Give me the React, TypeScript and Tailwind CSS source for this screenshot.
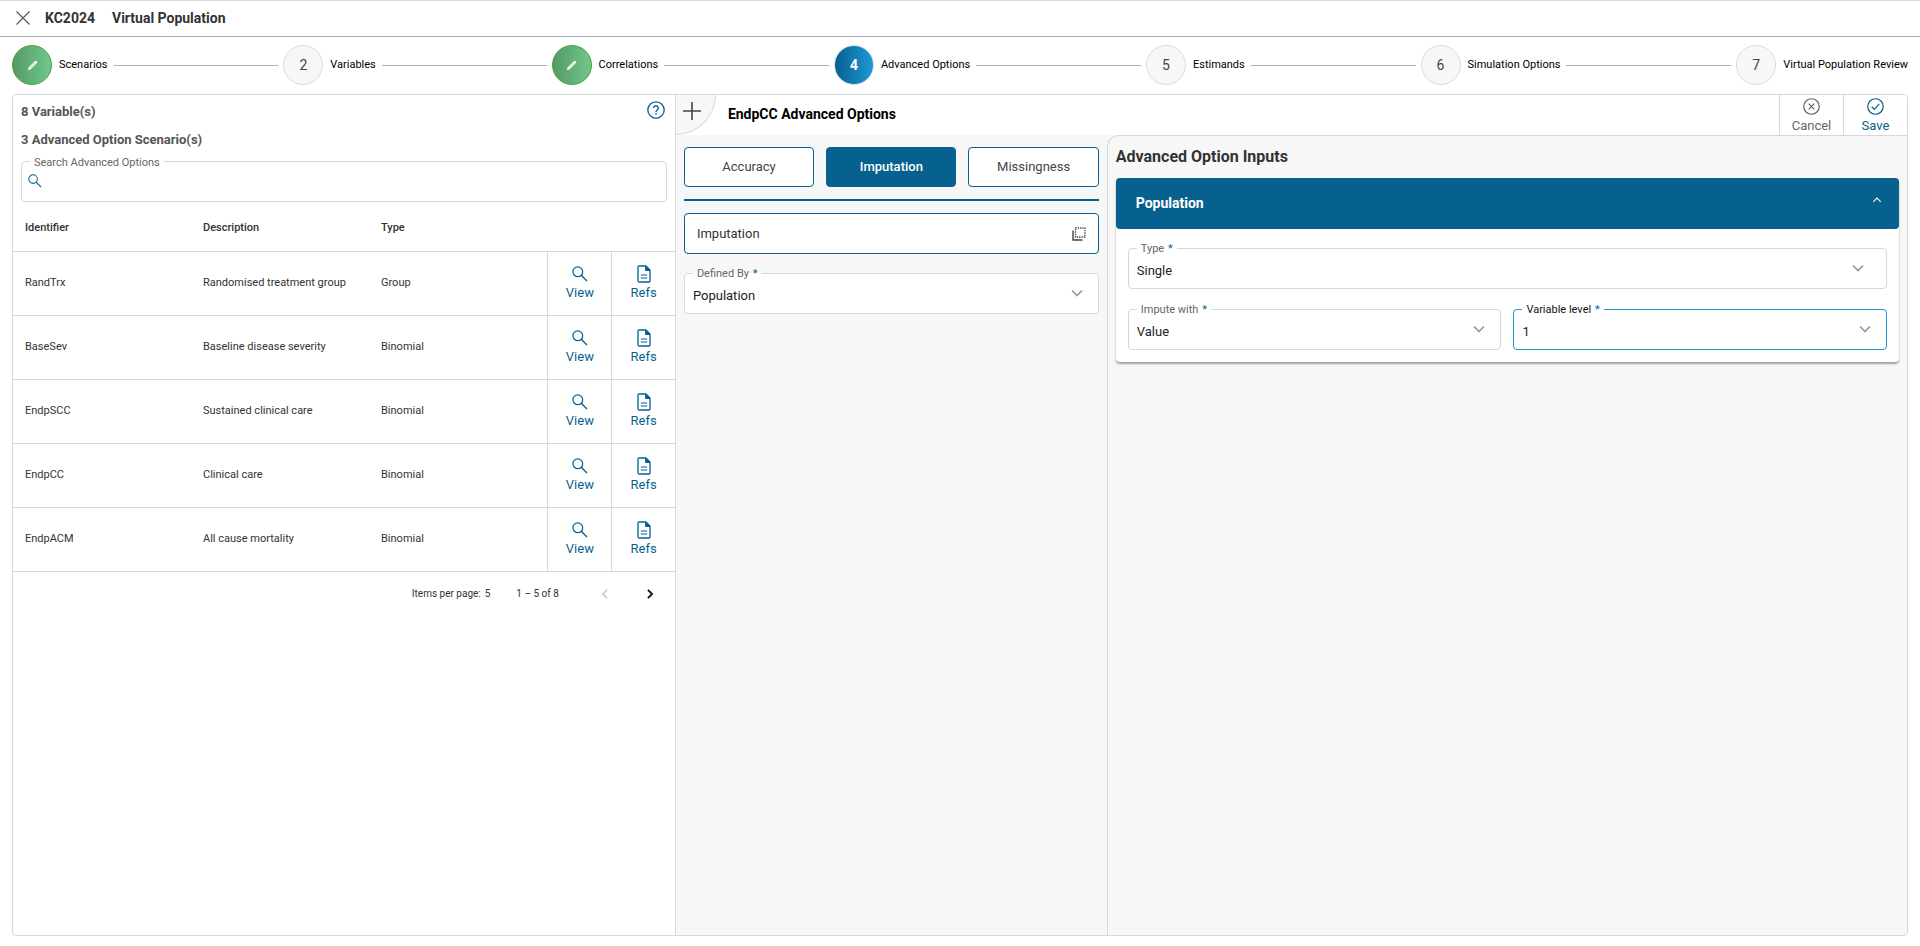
import { Fragment, type ReactNode } from "react";

type StepState = "done" | "active" | "todo";

const steps: { label: string; state: StepState }[] = [
  { label: "Scenarios", state: "done" },
  { label: "Variables", state: "todo" },
  { label: "Correlations", state: "done" },
  { label: "Advanced Options", state: "active" },
  { label: "Estimands", state: "todo" },
  { label: "Simulation Options", state: "todo" },
  { label: "Virtual Population Review", state: "todo" },
];

const circleClass: Record<StepState, string> = {
  done: "border-[#4d9f3f] bg-linear-to-r from-[#559b66] to-[#70c78b] text-white",
  active: "border-[#cfe3ee] bg-linear-to-r from-[#07618e] to-[#1c9ad6] font-bold text-white",
  todo: "border-[#d9dedd] bg-[#f7f7f7] font-normal text-[#444]",
};

const rows = [
  { id: "RandTrx", description: "Randomised treatment group", type: "Group" },
  { id: "BaseSev", description: "Baseline disease severity", type: "Binomial" },
  { id: "EndpSCC", description: "Sustained clinical care", type: "Binomial" },
  { id: "EndpCC", description: "Clinical care", type: "Binomial" },
  { id: "EndpACM", description: "All cause mortality", type: "Binomial" },
];

function PencilIcon() {
  return (
    <svg viewBox="0 0 12 12" className="size-[11px]" aria-hidden="true">
      <path d="M1 11l.7-2.8L8.600 1.300a1.300 1.300 0 0 1 2.100 2.100L3.800 10.300z" fill="#fff" />
      <path d="M3.300 8.700l5.400-5.400" stroke="#70bd86" strokeWidth=".6" />
    </svg>
  );
}

function SearchIcon({ className }: { className: string }) {
  return (
    <svg viewBox="0 0 16 16" className={className} fill="none" stroke="currentColor" aria-hidden="true">
      <circle cx="5.800" cy="5.800" r="4.900" strokeWidth="1.200" />
      <path d="M9.300 9.300l5.700 5.700" strokeWidth="1.400" />
    </svg>
  );
}

function DocumentIcon() {
  return (
    <svg viewBox="0 0 14 18" className="h-[18px] w-3.5" fill="none" stroke="currentColor" aria-hidden="true">
      <path d="M1 2.200Q1 1 2.200 1H9l4 4v10.800q0 1.200-1.200 1.200H2.200Q1 17 1 15.800z" strokeWidth="1.300" />
      <path d="M8.500 1v4.500H13z" fill="currentColor" />
      <path d="M3.800 10h6.400M3.800 13h6.400" strokeWidth="1.200" />
    </svg>
  );
}

function Chevron({ className, d = "M1 1.500l5 5 5-5", width = 1.7 }: { className: string; d?: string; width?: number }) {
  return (
    <svg viewBox="0 0 12 8" className={className} fill="none" stroke="currentColor" strokeWidth={width} aria-hidden="true">
      <path d={d} />
    </svg>
  );
}

function SelectField({
  id,
  label,
  value,
  focused = false,
  chevron = "right-[15px]",
}: {
  id: string;
  label: string;
  value: string;
  focused?: boolean;
  chevron?: string;
}) {
  return (
    <div
      className={`relative h-[41px] min-w-0 flex-1 rounded border bg-white ${focused ? "border-[#1e96cf]" : "border-[#d3dada]"}`}
    >
      <label
        htmlFor={id}
        className={`absolute -top-2 left-2 bg-linear-to-b from-transparent from-50% to-white to-50% px-1 text-[11px] leading-4 ${focused ? "text-[#111]" : "text-[#666]"}`}
      >
        <span className="absolute inset-x-0 top-[7px] h-0.5 bg-white" />
        <span className="relative">
          {label} <span className="ml-px text-[#07618e]">*</span>
        </span>
      </label>
      <select
        id={id}
        defaultValue={value}
        className="h-full w-full appearance-none bg-transparent pt-1 pl-2 text-[13px] text-[#222] outline-none"
      >
        <option>{value}</option>
      </select>
      <Chevron className={`pointer-events-none absolute top-[15px] h-2 w-3 text-[#999] ${chevron}`} />
    </div>
  );
}

function ToolbarButton({ label, className, children }: { label: string; className: string; children: ReactNode }) {
  return (
    <button
      type="button"
      className={`flex w-16 flex-col items-center justify-center gap-[3px] border-l border-[#d3dada] pt-px text-[13px] leading-4 ${className}`}
    >
      {children}
      {label}
    </button>
  );
}

export default function App() {
  return (
    <div className="flex min-h-screen flex-col border-t border-[#ddd] bg-white font-[Roboto,sans-serif] text-[#333]">
      <header className="flex h-9 items-center border-b border-[#a3b3b3] pb-0.5 pl-4 text-sm font-bold">
        <button type="button" aria-label="Close" className="mr-[15px]">
          <svg viewBox="0 0 14 14" className="size-3.5" fill="none" stroke="#555" strokeWidth="1.100">
            <path d="M.5.5l13 13M13.500.5l-13 13" />
          </svg>
        </button>
        <span className="mr-[17px]">KC2024</span>
        <h1>Virtual Population</h1>
      </header>

      <ol className="flex items-center px-3 pt-2 pb-1.5 text-[11px] text-black">
        {steps.map((step, index) => (
          <Fragment key={step.label}>
            {index > 0 && <li aria-hidden="true" className="mr-[5px] ml-1.5 h-px flex-1 bg-[#a3b3b3]" />}
            <li className="flex items-center gap-[7px]">
              <span
                className={`flex size-10 items-center justify-center rounded-full border text-sm ${circleClass[step.state]}`}
              >
                {step.state === "done" ? <PencilIcon /> : index + 1}
              </span>
              {step.label}
            </li>
          </Fragment>
        ))}
      </ol>

      <main className="mx-3 mt-[3px] mb-[10px] flex flex-1 overflow-hidden rounded border border-[#d3dada]">
        <section className="flex w-[35%] flex-col border-r border-[#d3dada]">
          <div className="flex justify-between pt-1.5 pr-[10px] pl-2">
            <div className="pt-px text-[13px] font-bold text-[#555]">
              <p className="leading-5">8 Variable(s)</p>
              <p className="mt-2 leading-5">3 Advanced Option Scenario(s)</p>
            </div>
            <button type="button" aria-label="Help" className="self-start text-[#07618e]">
              <svg viewBox="0 0 18 18" className="size-[18px]" fill="none" stroke="currentColor">
                <circle cx="9" cy="9" r="8.200" strokeWidth="1.300" />
                <path d="M6.700 7.100a2.300 2.300 0 1 1 3.600 1.900c-.9.6-1.300 1-1.300 2" strokeWidth="1.300" />
                <path d="M9 12.200v1.500" strokeWidth="1.400" />
              </svg>
            </button>
          </div>
          <div className="relative mx-2 mt-[11px] h-[41px] rounded border border-[#d3dada]">
            <label htmlFor="search" className="absolute -top-[7px] left-2 bg-white px-1 text-[11px] leading-4 text-[#666]">
              Search Advanced Options
            </label>
            <SearchIcon className="pointer-events-none absolute top-3 left-1.5 size-3.5 text-[#07618e]" />
            <input id="search" type="text" className="h-full w-full bg-transparent pl-7 text-[13px] outline-none" />
          </div>

          <table className="mt-1 w-full table-fixed text-left text-[11px]">
            <colgroup>
              <col className="w-[190px]" />
              <col className="w-[178px]" />
              <col />
              <col className="w-16" />
              <col className="w-[63px]" />
            </colgroup>
            <thead>
              <tr className="h-[45px] border-b border-[#d3dada]">
                <th className="pl-3 font-medium">Identifier</th>
                <th className="font-medium">Description</th>
                <th className="font-medium">Type</th>
                <td colSpan={2} />
              </tr>
            </thead>
            <tbody>
              {rows.map((row) => (
                <tr key={row.id} className="h-16 border-b border-[#d3dada]">
                  <td className="pt-px pl-3">{row.id}</td>
                  <td className="pt-px">{row.description}</td>
                  <td className="pt-px">{row.type}</td>
                  <td className="border-l border-[#d3dada]">
                    <button
                      type="button"
                      className="flex w-full flex-col items-center gap-0.5 text-[13px] leading-4 text-[#07618e]"
                    >
                      <SearchIcon className="m-px size-4" />
                      View
                    </button>
                  </td>
                  <td className="border-l border-[#d3dada]">
                    <button
                      type="button"
                      className="flex w-full flex-col items-center gap-0.5 text-[13px] leading-4 text-[#07618e]"
                    >
                      <DocumentIcon />
                      Refs
                    </button>
                  </td>
                </tr>
              ))}
            </tbody>
          </table>

          <div className="flex items-center justify-end pt-3 pr-[13px] text-[10px]">
            <span className="mr-1">Items per page:</span>
            <span className="mr-[26px]">5</span>
            <span className="mr-[34px]">1 – 5 of 8</span>
            <button type="button" aria-label="Previous page" disabled className="flex h-5 w-6 items-center justify-center">
              <svg viewBox="0 0 8 12" className="h-2.5 w-2" fill="none" stroke="#c4c4c4" strokeWidth="1.800">
                <path d="M6.500 1l-5 5 5 5" />
              </svg>
            </button>
            <button type="button" aria-label="Next page" className="ml-[21px] flex h-5 w-6 items-center justify-center">
              <svg viewBox="0 0 8 12" className="h-2.5 w-2" fill="none" stroke="#111" strokeWidth="2.200">
                <path d="M1.500 1l5 5-5 5" />
              </svg>
            </button>
          </div>
        </section>

        <section className="flex min-w-0 flex-1 flex-col bg-[#f7f7f7]">
          <div className="flex h-10 bg-white">
            <button
              type="button"
              aria-label="Add"
              className="flex w-10 rounded-br-[40px] border-r border-b border-[#d3dada] bg-[#f7f7f7] pt-[7px] pl-[7px]"
            >
              <svg viewBox="0 0 18 18" className="size-[18px]" stroke="#444" strokeWidth="1.600">
                <path d="M0 9h18M9 0v18" />
              </svg>
            </button>
            <h2 className="flex-1 pl-3 text-sm leading-[39px] font-bold text-black">EndpCC Advanced Options</h2>
            <ToolbarButton label="Cancel" className="text-[#666]">
              <svg viewBox="0 0 18 18" className="size-[17px]" fill="none" stroke="currentColor" strokeWidth="1.300">
                <circle cx="9" cy="9" r="8.200" />
                <path d="M6 6l6 6M12 6l-6 6" />
              </svg>
            </ToolbarButton>
            <ToolbarButton label="Save" className="text-[#07618e]">
              <svg viewBox="0 0 18 18" className="size-[17px]" fill="none" stroke="currentColor" strokeWidth="1.300">
                <circle cx="9" cy="9" r="8.200" />
                <path d="M5 9.300l2.800 2.800L13 6.300" />
              </svg>
            </ToolbarButton>
          </div>

          <div className="flex flex-1">
            <div className="w-[35%] px-2 pt-3">
              <div className="grid grid-cols-3 gap-3 border-b-2 border-[#07618e] pb-3 text-[13px]">
                <button type="button" className="h-10 rounded border border-[#07618e] bg-white text-[#444]">
                  Accuracy
                </button>
                <button type="button" className="h-10 rounded border border-[#07618e] bg-[#07618e] font-medium text-white">
                  Imputation
                </button>
                <button type="button" className="h-10 rounded border border-[#07618e] bg-white text-[#444]">
                  Missingness
                </button>
              </div>
              <button
                type="button"
                className="mt-3 flex h-[41px] w-full items-center justify-between rounded border border-[#07618e] bg-white px-3 text-[13px]"
              >
                Imputation
                <svg viewBox="0 0 14 14" className="size-3.5" fill="none" stroke="#444" aria-hidden="true">
                  <path d="M1 3.500V13h9.500" strokeWidth="1.400" />
                  <rect x="3.500" y="1" width="9.500" height="9" strokeWidth="1.300" strokeDasharray="1.300 1.010" />
                </svg>
              </button>
              <div className="mt-[19px] flex">
                <SelectField id="defined-by" label="Defined By" value="Population" />
              </div>
            </div>

            <div className="min-w-0 flex-1 rounded-tl-xl border-t border-l border-[#d3dada] px-2 pt-[9px]">
              <h2 className="text-base leading-6 font-bold">Advanced Option Inputs</h2>
              <div className="mt-[9px] rounded bg-white shadow-[0_2px_2px_rgba(0,0,0,0.35)]">
                <button
                  type="button"
                  className="flex h-[51px] w-full items-center justify-between rounded bg-[#07618e] pr-[17px] pb-px pl-5 text-sm font-bold text-white"
                >
                  Population
                  <Chevron className="mb-1.5 h-1.5 w-2.5" d="M1 6.500l5-5 5 5" width={1.5} />
                </button>
                <div className="flex flex-col gap-5 px-3 pt-[19px] pb-3">
                  <div className="flex">
                    <SelectField id="type" label="Type" value="Single" chevron="right-[22px]" />
                  </div>
                  <div className="flex gap-3">
                    <SelectField id="impute-with" label="Impute with" value="Value" />
                    <SelectField id="variable-level" label="Variable level" value="1" focused />
                  </div>
                </div>
              </div>
            </div>
          </div>
        </section>
      </main>
    </div>
  );
}
